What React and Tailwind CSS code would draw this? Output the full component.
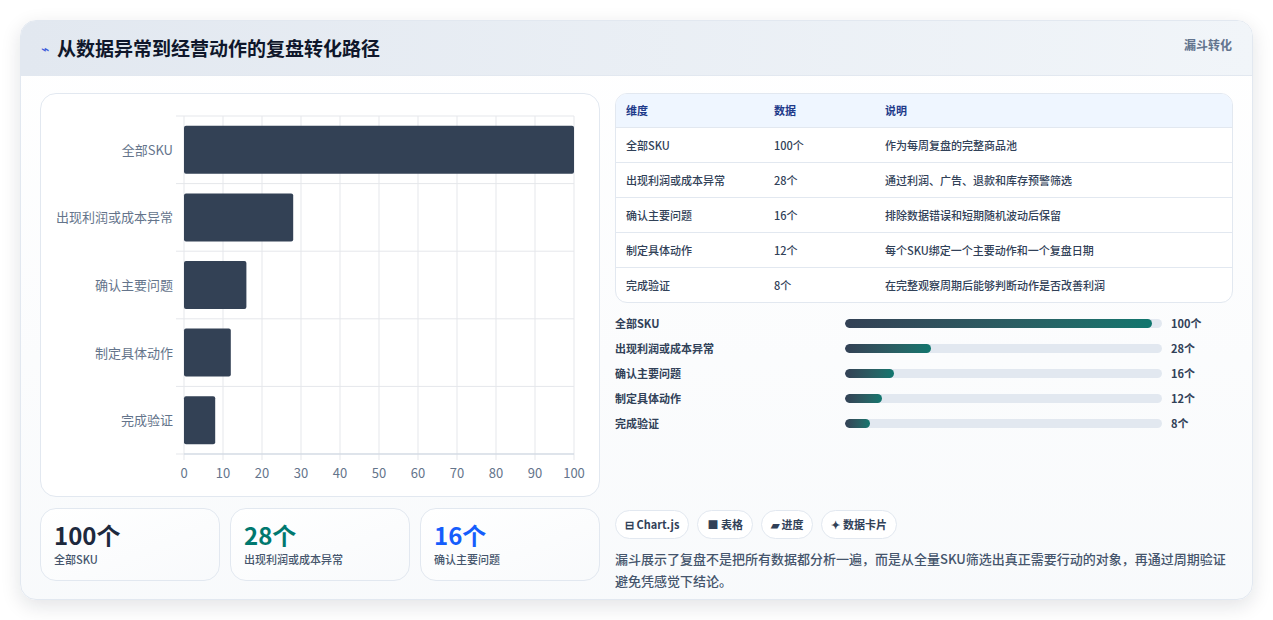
const F = { fontFamily: '"Noto Sans CJK SC","Noto Sans",sans-serif' };
const data = [
  ["全部SKU", 100, "作为每周复盘的完整商品池"],
  ["出现利润或成本异常", 28, "通过利润、广告、退款和库存预警筛选"],
  ["确认主要问题", 16, "排除数据错误和短期随机波动后保留"],
  ["制定具体动作", 12, "每个SKU绑定一个主要动作和一个复盘日期"],
  ["完成验证", 8, "在完整观察周期后能够判断动作是否改善利润"],
];

function Chart() {
  const x0 = 143, x1 = 533, y0 = 22, rh = 67.6;
  return (
    <svg width="558" height="402" className="block">
      {Array.from({ length: 11 }).map((_, i) => {
        const x = x0 + i * 39;
        return <g key={i}>
          <line x1={x} x2={x} y1={y0} y2={y0 + 5 * rh + 6} stroke="#e5e7eb" />
          <text x={x} y={384} textAnchor="middle" fontSize="13" fill="#64748b" style={F}>{i * 10}</text>
        </g>;
      })}
      {Array.from({ length: 6 }).map((_, i) => (
        <line key={i} x1={x0 - 8} x2={x1} y1={y0 + i * rh} y2={y0 + i * rh} stroke="#e5e7eb" />
      ))}
      <line x1={x0} x2={x1} y1={y0 + 5 * rh} y2={y0 + 5 * rh} stroke="#cbd5e1" />
      {data.map(([l, v], i) => {
        const cy = y0 + i * rh + rh / 2;
        return <g key={l}>
          <text x={x0 - 11} y={cy + 5} textAnchor="end" fontSize="13" fill="#64748b" style={F}>{l}</text>
          <rect x={x0} y={cy - 24} width={v * 3.9} height={48} rx="2" fill="#334155" />
        </g>;
      })}
    </svg>
  );
}

export default function App() {
  return (
    <div className="w-[1273px] h-[620px] bg-white pt-5 px-5" style={F}>
      <div className="h-[580px] rounded-2xl border border-slate-200 shadow-[0_6px_20px_rgba(15,23,42,0.12)] overflow-hidden bg-gradient-to-b from-white to-slate-50">
        <div className="h-[55px] flex items-center justify-between px-5 bg-gradient-to-r from-[#e2e8f0] to-[#f1f5f9] border-b border-slate-200">
          <div className="flex items-center gap-2">
            <span className="text-[#3b5bdb] text-sm">⌁</span>
            <span className="text-[19px] font-bold text-slate-900">从数据异常到经营动作的复盘转化路径</span>
          </div>
          <span className="text-xs font-bold text-slate-500 self-start mt-4">漏斗转化</span>
        </div>
        <div className="flex gap-[15px] px-[19px] pt-[17px]">
          <div className="w-[560px] flex flex-col gap-[11px]">
            <div className="h-[404px] rounded-2xl border border-slate-200 bg-white">
              <Chart />
            </div>
            <div className="grid grid-cols-3 gap-[10px]">
              {[["100个", "全部SKU", "text-slate-800"], ["28个", "出现利润或成本异常", "text-teal-700"], ["16个", "确认主要问题", "text-blue-600"]].map(([n, l, c]) => (
                <div key={l} className="h-[73px] rounded-2xl border border-slate-200 bg-gradient-to-br from-white to-slate-50 px-[13px] pt-[10px]">
                  <div className={`text-[24px] font-bold leading-[32px] ${c}`}>{n}</div>
                  <div className="text-[11px] text-slate-600 font-medium">{l}</div>
                </div>
              ))}
            </div>
          </div>
          <div className="flex-1 pr-[0px] flex flex-col">
            <div className="rounded-xl border border-slate-200 overflow-hidden bg-white">
              <div className="flex h-[33px] items-center bg-[#eff6ff] text-[11px] font-bold text-[#1e3a8a] px-[10px]">
                <span className="w-[148px]">维度</span><span className="w-[111px]">数据</span><span>说明</span>
              </div>
              {data.map(([l, v, d]) => (
                <div key={l} className="flex h-[35px] items-center border-t border-slate-200 text-[11px] font-medium text-slate-700 px-[10px]">
                  <span className="w-[148px]">{l}</span><span className="w-[111px]">{v}个</span><span>{d}</span>
                </div>
              ))}
            </div>
            <div className="flex flex-col gap-[9px] mt-[12px]">
              {data.map(([l, v]) => (
                <div key={l} className="flex items-center h-[16px] text-[11px] font-bold text-slate-700">
                  <span className="w-[230px]">{l}</span>
                  <div className="w-[317px] h-[9px] rounded-full bg-slate-200 overflow-hidden">
                    <div className="h-full rounded-full bg-gradient-to-r from-[#334155] to-[#0f766e]" style={{ width: `${Math.max(v * 0.97, 7.5)}%` }} />
                  </div>
                  <span className="ml-[9px]">{v}个</span>
                </div>
              ))}
            </div>
            <div className="flex gap-2 mt-[79px]">
              {["⊟ Chart.js", "■ 表格", "▰ 进度", "✦ 数据卡片"].map(t => (
                <span key={t} className="h-[29px] px-[9px] flex items-center rounded-full border border-slate-200 bg-white text-[11px] font-bold text-slate-700">{t}</span>
              ))}
            </div>
            <p className="mt-[9px] text-[13px] leading-[22px] font-medium text-slate-600">漏斗展示了复盘不是把所有数据都分析一遍，而是从全量SKU筛选出真正需要行动的对象，再通过周期验证避免凭感觉下结论。</p>
          </div>
        </div>
      </div>
    </div>
  );
}
